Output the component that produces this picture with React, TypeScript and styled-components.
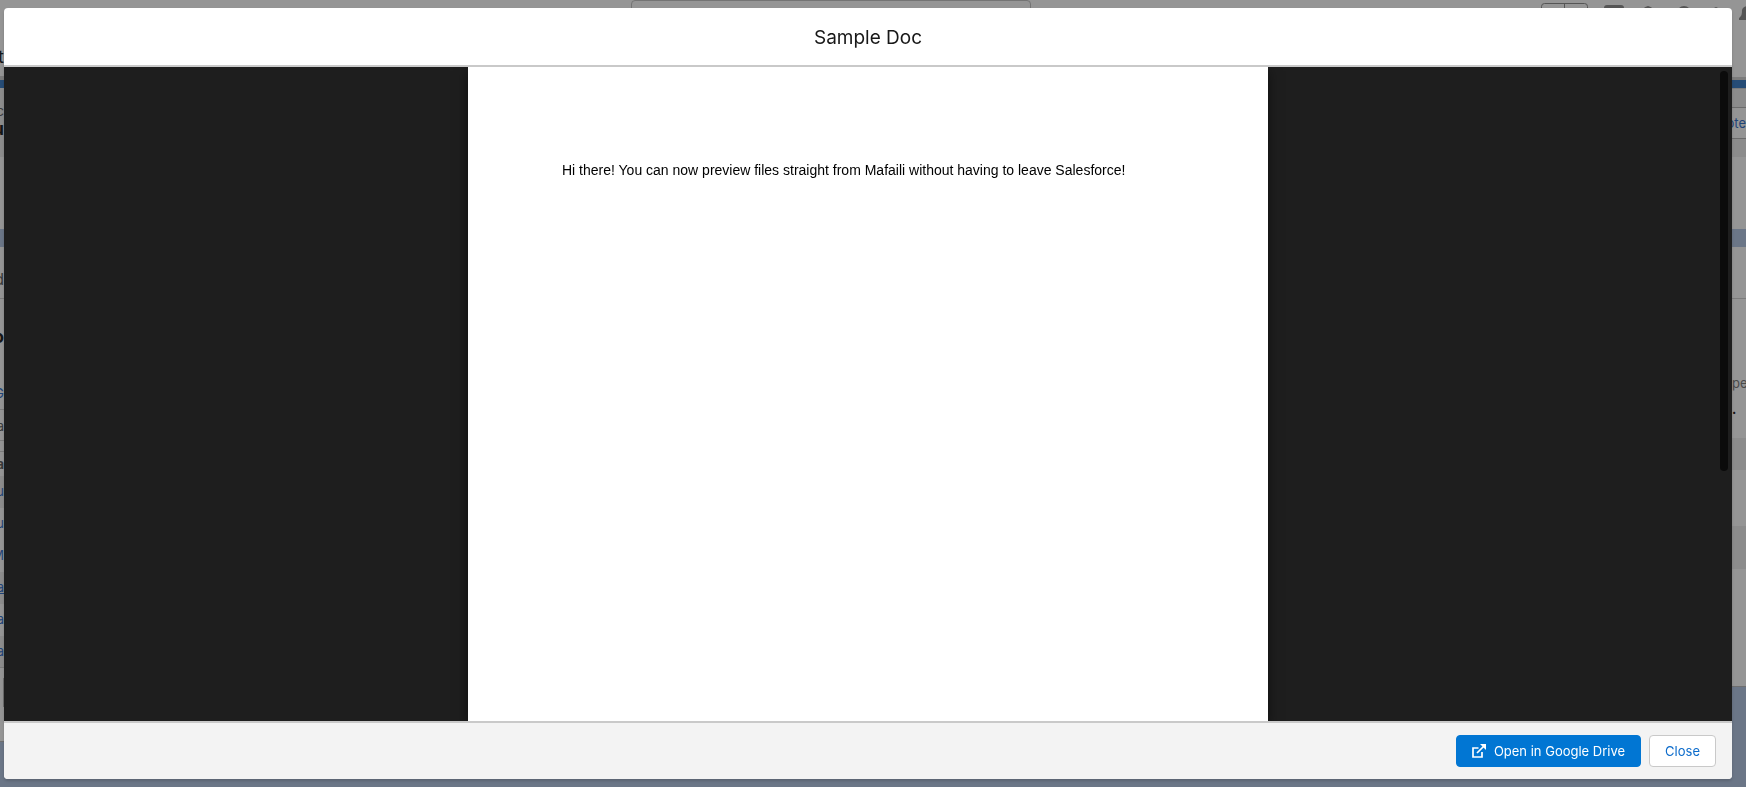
import React from "react";
import styled, { createGlobalStyle } from "styled-components";

const GlobalStyle = createGlobalStyle`
  * { box-sizing: border-box; }
  html, body, #root { height: 100%; }
  body {
    margin: 0;
    overflow: hidden;
    background: #6b7687;
    font-family: Inter, "Liberation Sans", sans-serif;
  }
`;

const Page = styled.div`
  display: flex;
  flex-direction: column;
  min-height: 100vh;
`;

const TopBar = styled.header`
  display: grid;
  grid-template-columns: 1fr 400px 1fr;
  height: 26px;
  background: #959595;
`;

const SearchBox = styled.div`
  grid-column: 2;
  margin: 0 42px 0 -42px;
  border: 1px solid #747474;
  border-radius: 4px;
`;

const Tools = styled.div`
  display: flex;
  justify-content: flex-end;
`;

const Columns = styled.div`
  display: flex;
  justify-content: space-between;
`;

const Rail = styled.div<{ $width: number }>`
  width: ${(p) => p.$width}px;
  overflow: hidden;
`;

const Strip = styled.div<{
  $h: number;
  $bg?: string;
  $line?: string;
  $ink?: string;
  $bold?: boolean;
  $size?: number;
  $align?: string;
  $edge?: boolean;
  $underline?: boolean;
}>`
  display: flex;
  align-items: center;
  justify-content: ${(p) => p.$align ?? "flex-end"};
  height: ${(p) => p.$h}px;
  padding-bottom: ${(p) => (p.$h === 32 ? 2 : 0)}px;
  background: ${(p) => p.$bg ?? "#959595"};
  border-bottom: ${(p) => (p.$line ? `1px solid ${p.$line}` : "0")};
  border-right: ${(p) => (p.$edge ? "1px solid #6f6f6f" : "0")};
  color: ${(p) => p.$ink ?? "#3a3a3a"};
  font-size: ${(p) => p.$size ?? 13}px;
  font-weight: ${(p) => (p.$bold ? 700 : 400)};
  line-height: 16px;
  text-decoration: ${(p) => (p.$underline ? "underline" : "none")};
  white-space: nowrap;
`;

const Dialog = styled.section`
  position: fixed;
  inset: 8px 14px 8px 4px;
  display: flex;
  flex-direction: column;
  overflow: hidden;
  border-radius: 4px;
  background: #fff;
  box-shadow: 0 2px 3px rgba(0, 0, 0, 0.16);
`;

const DialogHeader = styled.header`
  display: flex;
  align-items: center;
  justify-content: center;
  height: 59px;
  flex: none;
  padding-top: 2px;
  border-bottom: 2px solid #c9c9c9;
`;

const Title = styled.h2`
  margin: 0;
  color: #181818;
  font-size: 19px;
  font-weight: 400;
  line-height: 24px;
`;

const Viewer = styled.div`
  position: relative;
  display: flex;
  justify-content: center;
  flex: 1;
  min-height: 0;
  overflow: hidden;
  background: #1e1e1e;
`;

const Sheet = styled.article`
  width: 800px;
  padding: 93px 94px;
  background: #fff;
  box-shadow: 0 4px 12px rgba(0, 0, 0, 0.5);
`;

const Paragraph = styled.p`
  margin: 0;
  color: #000;
  font-family: "Liberation Sans", Arial, sans-serif;
  font-size: 14px;
  line-height: 20px;
`;

const ScrollThumb = styled.div`
  position: absolute;
  top: 4px;
  right: 4px;
  width: 8px;
  height: 400px;
  border-radius: 4px;
  background: #0b0b0b;
`;

const DialogFooter = styled.footer`
  display: flex;
  align-items: center;
  justify-content: flex-end;
  gap: 8px;
  height: 58px;
  flex: none;
  padding: 0 16px;
  border-top: 2px solid #c9c9c9;
  background: #f3f3f3;
`;

const Button = styled.button<{ $primary?: boolean }>`
  display: flex;
  align-items: center;
  gap: 8px;
  height: 32px;
  padding: 0 15px;
  border: 1px solid ${(p) => (p.$primary ? "#0176d3" : "#c9c9c9")};
  border-radius: 4px;
  background: ${(p) => (p.$primary ? "#0176d3" : "#fff")};
  color: ${(p) => (p.$primary ? "#fff" : "#0b6bcb")};
  font-family: inherit;
  font-size: 13px;
  font-weight: 400;
  line-height: 16px;
`;

type Segment = {
  h: number;
  bg?: string;
  line?: string;
  text?: string;
  ink?: string;
  bold?: boolean;
  size?: number;
  align?: string;
  edge?: boolean;
  underline?: boolean;
};

const LINK = "#1f4478";
const SHADE = "#8c8c8c";
const NAV = "#264c76";
const BAND = "#6b7687";

const leftSegments: Segment[] = [
  { h: 19 },
  { h: 24, text: "t", size: 18, ink: "#161616" },
  { h: 8, line: "#7c7c7c" },
  { h: 3, bg: "#7c7c7c" },
  { h: 8, bg: NAV },
  { h: 15, bg: SHADE },
  { h: 16, bg: SHADE, text: "c" },
  { h: 20, bg: SHADE, text: "u", bold: true, size: 18, ink: "#161616" },
  { h: 18, bg: SHADE },
  { h: 72 },
  { h: 18, bg: BAND },
  { h: 23 },
  { h: 18, text: "d", size: 16 },
  { h: 11, line: "#7c7c7c" },
  { h: 28 },
  { h: 20, text: "o", bold: true, size: 18, ink: "#161616" },
  { h: 38 },
  { h: 16, text: "G", ink: LINK },
  { h: 9, line: "#7c7c7c" },
  { h: 8 },
  { h: 16, text: "a" },
  { h: 7, line: "#7c7c7c" },
  { h: 11, line: "#7c7c7c" },
  { h: 24, text: "a", bold: true },
  { h: 32, bg: SHADE, text: "u", ink: LINK },
  { h: 32, text: "u", ink: LINK },
  { h: 32, text: "M", ink: LINK },
  { h: 32, bg: SHADE, text: "a", ink: LINK, underline: true },
  { h: 32, text: "a", ink: LINK },
  { h: 32, bg: SHADE, text: "a", ink: LINK, line: "#7c7c7c" },
  { h: 10 },
  { h: 29, edge: true },
  { h: 35, line: "#6f6f6f" },
];

const rightSegments: Segment[] = [
  { h: 51 },
  { h: 3, bg: "#7c7c7c" },
  { h: 9, bg: NAV, line: "#7c7c7c" },
  { h: 19, bg: SHADE, line: "#6c6c6c" },
  { h: 31, text: "ote", ink: LINK, line: "#6c6c6c" },
  { h: 18, bg: SHADE },
  { h: 72 },
  { h: 18, bg: BAND },
  { h: 52, line: "#7c7c7c" },
  { h: 76 },
  { h: 16, text: "pe", ink: "#4a4a4a", align: "flex-start" },
  { h: 10 },
  { h: 16, text: ".", bold: true, ink: "#161616", align: "flex-start" },
  { h: 21 },
  { h: 32, bg: SHADE },
  { h: 56 },
  { h: 43, bg: SHADE },
  { h: 118, line: "#6f6f6f" },
];

function Segments({ items, width }: { items: Segment[]; width: number }) {
  return (
    <Rail $width={width} aria-hidden="true">
      {items.map((s, i) => (
        <Strip
          key={i}
          $h={s.h}
          $bg={s.bg}
          $line={s.line}
          $ink={s.ink}
          $bold={s.bold}
          $size={s.size}
          $align={s.align}
          $edge={s.edge}
          $underline={s.underline}
        >
          {s.text}
        </Strip>
      ))}
    </Rail>
  );
}

function ToolIcons() {
  return (
    <svg width="206" height="26" viewBox="0 0 206 26" aria-hidden="true">
      <rect x="1.5" y="3.5" width="46" height="24" rx="3" fill="none" stroke="#555" />
      <path d="M24.5 3v20" stroke="#555" />
      <rect x="64" y="5" width="20" height="20" rx="3" fill="#555" />
      <path d="M104 8c1-1 3-2 4-2s3 1 4 2v3h-8z" fill="#555" />
      <circle cx="144" cy="13" r="7" fill="#555" />
      <path d="M174 8l2-1 2 1v6h-4z" fill="#555" />
      <path d="M199 20v-2c3-2 3-5 3-8 1-3 3-4 6-4v14z" fill="#555" />
    </svg>
  );
}

function ExternalIcon() {
  return (
    <svg width="14" height="14" viewBox="0 0 14 14" fill="none" stroke="#fff" strokeWidth="1.7" aria-hidden="true">
      <path d="M6.5 4H1v9h9V8" />
      <path d="M5 9L11.5 2.5" />
      <path d="M8 0h6v6z" fill="#fff" stroke="none" />
    </svg>
  );
}

export default function App() {
  return (
    <>
      <GlobalStyle />
      <Page>
        <TopBar>
          <SearchBox />
          <Tools>
            <ToolIcons />
          </Tools>
        </TopBar>
        <Columns>
          <Segments items={leftSegments} width={4} />
          <Segments items={rightSegments} width={14} />
        </Columns>
      </Page>
      <Dialog role="dialog" aria-modal="true" aria-labelledby="preview-title">
        <DialogHeader>
          <Title id="preview-title">Sample Doc</Title>
        </DialogHeader>
        <Viewer>
          <Sheet>
            <Paragraph>
              Hi there! You can now preview files straight from Mafaili without having to leave Salesforce!
            </Paragraph>
          </Sheet>
          <ScrollThumb />
        </Viewer>
        <DialogFooter>
          <Button type="button" $primary>
            <ExternalIcon />
            Open in Google Drive
          </Button>
          <Button type="button">Close</Button>
        </DialogFooter>
      </Dialog>
    </>
  );
}
